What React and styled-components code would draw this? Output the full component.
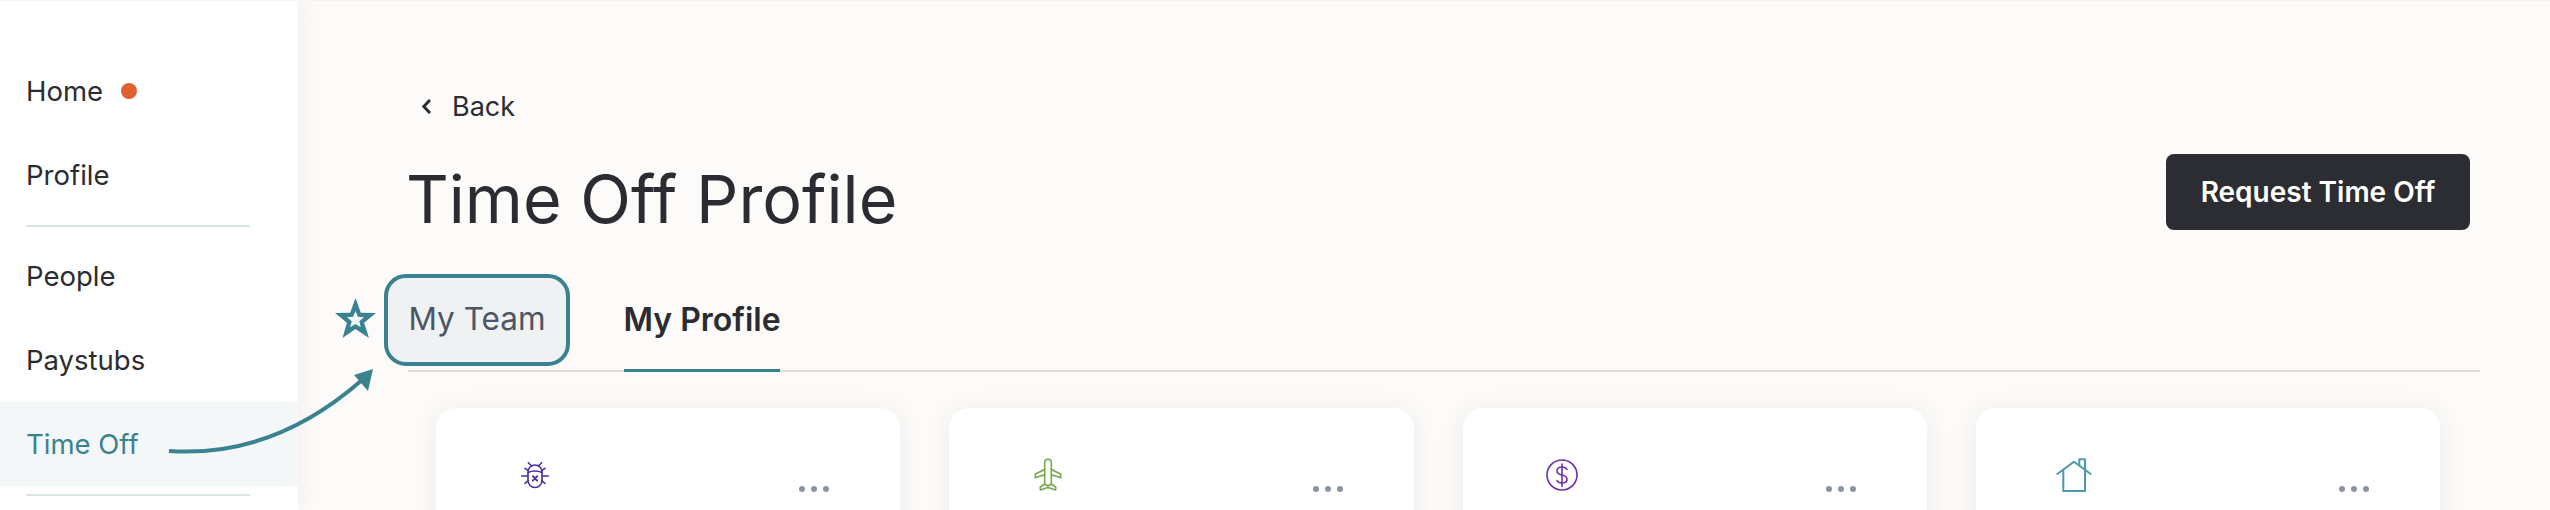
import React from 'react';
import styled, { createGlobalStyle } from 'styled-components';

const GlobalStyle = createGlobalStyle`
  html, body {
    margin: 0;
    padding: 0;
    background: #fcfbf9;
  }
  body {
    font-family: Inter, "Liberation Sans", sans-serif;
    color: #2a2c32;
  }
`;

const Page = styled.div`
  position: relative;
  display: flex;
  width: 2550px;
  height: 510px;
  overflow: hidden;
  background: #fcfbf9;
`;

const Sidebar = styled.nav`
  flex: 0 0 298px;
  padding-top: 49px;
  background: #fff;
  box-shadow: 0 0 22px rgba(60, 50, 40, 0.07), inset 0 1px 0 #f6f5f3;
`;

const NavItem = styled.div`
  display: flex;
  align-items: center;
  gap: 18px;
  height: 84px;
  padding-left: 26px;
  font-size: 27.5px;
  color: ${p => (p.$active ? '#3b8290' : '#2a2c32')};
  background: ${p => (p.$active ? '#f3f7f7' : 'transparent')};
`;

const Dot = styled.span`
  width: 16px;
  height: 16px;
  border-radius: 50%;
  background: #e06030;
`;

const Divider = styled.div`
  height: 2px;
  margin: ${p => p.$margin};
  background: #d8e5e5;
`;

const Main = styled.main`
  flex: 1;
  padding: 88px 70px 0 110px;
  box-shadow: inset 0 1px 0 #f6f5f3;
`;

const BackLink = styled.div`
  display: flex;
  align-items: center;
  gap: 21px;
  height: 36px;
  padding-left: 14px;
  font-size: 27px;
`;

const TitleRow = styled.div`
  display: flex;
  justify-content: space-between;
  align-items: flex-start;
  padding-right: 10px;
  margin-top: 30px;
  height: 118px;
`;

const Title = styled.h1`
  margin: 2px 0 0 -2px;
  font-size: 66.3px;
  line-height: 86px;
  font-weight: 400;
  color: #2a2c32;
`;

const RequestButton = styled.button`
  width: 304px;
  height: 76px;
  border: 0;
  border-radius: 8px;
  background: #2c2d32;
  color: #fff;
  font-family: inherit;
  font-size: 28px;
  font-weight: 600;
`;

const Tabs = styled.div`
  display: flex;
  align-items: flex-end;
  height: 98px;
  border-bottom: 2px solid #dedcd9;
`;

const HighlightTab = styled.div`
  display: flex;
  align-items: center;
  justify-content: center;
  box-sizing: border-box;
  width: 186px;
  height: 92px;
  margin: 0 54px 4px -24px;
  padding-bottom: 3px;
  border: 4px solid #3b8290;
  border-radius: 22px;
  background: #eff2f3;
  color: #4c5766;
  font-size: 31.5px;
  white-space: nowrap;
`;

const ProfileTab = styled.div`
  display: flex;
  align-items: flex-start;
  justify-content: center;
  box-sizing: border-box;
  width: 156px;
  height: 96px;
  margin-bottom: -2px;
  padding-top: 24px;
  border-bottom: 3px solid #3b8290;
  font-size: 32px;
  font-weight: 600;
  color: #2a2c32;
  white-space: nowrap;
`;

const CardGrid = styled.div`
  display: grid;
  grid-template-columns: repeat(4, 1fr);
  gap: 49px;
  margin: 36px 40px 0 28px;
`;

const Card = styled.div`
  height: 200px;
  border-radius: 20px;
  background: #fff;
  box-shadow: 0 2px 24px rgba(60, 50, 40, 0.08);
`;

const CardHead = styled.div`
  display: flex;
  justify-content: space-between;
  padding: 47px 71px 0 79px;
`;

const IconSvg = styled.svg`
  display: block;
  width: 40px;
  height: 40px;
  fill: none;
  stroke: ${p => p.$color};
  stroke-width: ${p => p.$weight || 1.6};
  stroke-linecap: round;
  stroke-linejoin: round;
`;

const Dots = styled.div`
  display: flex;
  gap: 6px;
  margin-top: 31px;
  height: 6px;
`;

const DotMark = styled.span`
  width: 6px;
  height: 6px;
  border-radius: 50%;
  background: #8a94a3;
`;

const Annotation = styled.svg`
  position: absolute;
  left: 160px;
  top: 290px;
  width: 230px;
  height: 170px;
  pointer-events: none;
`;

const BugIcon = () => (
  <IconSvg viewBox="0 0 40 40" $color="#4b2ea3">
    <path d="M13 17a7 7 0 0 1 14 0v8.500a7 7 0 0 1-14 0z" />
    <path d="M13 17.500q7-3 14 0" />
    <path d="M6.700 21H13M27 21h6.300M13.300 7.700 16.700 11M26.700 7.700 23.300 11M10 13.300l3.300 2.400M30 13.300l-3.300 2.400M10 28.300l3.300-2.600M30 28.300l-3.300-2.600" />
    <path d="M17.800 21.200l4.400 4.400M22.200 21.200l-4.400 4.400" strokeWidth="1.900" />
  </IconSvg>
);

const PlaneIcon = () => (
  <IconSvg viewBox="0 0 40 40" $color="#76a84f">
    <path d="M16.700 7.500a3.300 3.300 0 0 1 6.600 0V14.500L32.700 19v3.800L23.300 19.800V29l4.400 3v3L20 32.500 12.300 35v-3l4.400-3V19.800L7.300 22.800V19l9.400-4.500z" />
    <path d="M16.700 14.500v5.300M23.300 14.500v5.300M16.700 29 20 31l3.300-2" />
  </IconSvg>
);

const DollarIcon = () => (
  <IconSvg viewBox="0 0 40 40" $color="#6f2da8">
    <circle cx="20" cy="20" r="15" />
    <path d="M20 9v22.500M25 14.500C24 12.500 22 12 20 12c-3 0-5 1.500-5 4 0 3 2.500 3.500 5 4s5 1.500 5 4.500c0 2.500-2 3.500-5 3.500-2 0-4-.5-5-2.500" />
  </IconSvg>
);

const HouseIcon = () => (
  <IconSvg viewBox="0 0 40 40" $color="#4a9aab" $weight={2}>
    <path d="M2.300 19 19 6.700 35.700 19" />
    <path d="M8.300 15.500V36h21.700V15.500" />
    <path d="M24.300 10.500V4.300H30V15" />
  </IconSvg>
);

const cards = [BugIcon, PlaneIcon, DollarIcon, HouseIcon];

function App() {
  return (
    <Page>
      <GlobalStyle />
      <Sidebar>
        <NavItem>
          Home <Dot />
        </NavItem>
        <NavItem>Profile</NavItem>
        <Divider $margin="8px 48px 7px 26px" />
        <NavItem>People</NavItem>
        <NavItem>Paystubs</NavItem>
        <NavItem $active>Time Off</NavItem>
        <Divider $margin="8px 48px 0 26px" />
      </Sidebar>
      <Main>
        <BackLink>
          <svg width="9" height="15" viewBox="0 0 9 15" fill="none" stroke="#2a2c32" strokeWidth="3">
            <path d="M8 1 1.800 7.500 8 14" />
          </svg>
          Back
        </BackLink>
        <TitleRow>
          <Title>Time Off Profile</Title>
          <RequestButton>Request Time Off</RequestButton>
        </TitleRow>
        <Tabs>
          <HighlightTab>My Team</HighlightTab>
          <ProfileTab>My Profile</ProfileTab>
        </Tabs>
        <CardGrid>
          {cards.map((Icon, i) => (
            <Card key={i}>
              <CardHead>
                <Icon />
                <Dots>
                  <DotMark />
                  <DotMark />
                  <DotMark />
                </Dots>
              </CardHead>
            </Card>
          ))}
        </CardGrid>
      </Main>
      <Annotation viewBox="160 290 230 170">
        <path d="M169 451C240 456 305 430 362 380" fill="none" stroke="#3b8290" strokeWidth="4" />
        <polygon points="373,369 354,375 368,391" fill="#3b8290" />
        <polygon
          points="355.500,298 360.800,312.700 376,313 364.100,322.800 369,338 355.500,329 342.500,338 346.900,322.800 335,313 350.200,312.700"
          fill="#3b8290"
        />
        <polygon
          points="355.500,311 357.900,316.800 364,317.200 359.300,321.200 360.800,327.300 355.500,324 350.200,327.300 351.700,321.200 347,317.200 353.100,316.800"
          fill="#f1f6f6"
        />
      </Annotation>
    </Page>
  );
}

export default App;
